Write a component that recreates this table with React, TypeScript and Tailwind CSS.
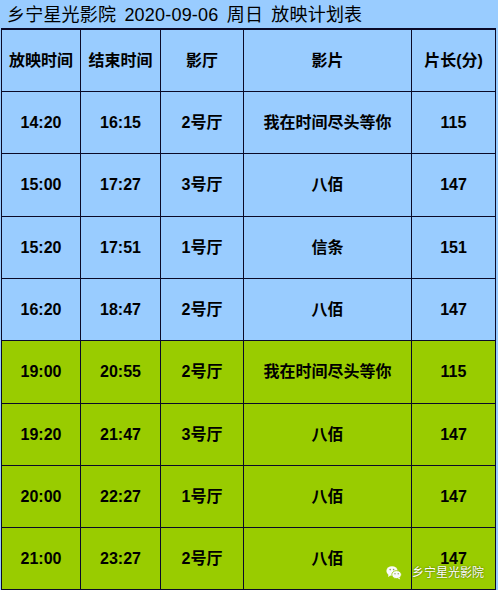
import React from "react";

const rows = [
  { s: "14:20", e: "16:15", h: "2号厅", m: "我在时间尽头等你", d: "115", g: false, cls: "h-[62px]" },
  { s: "15:00", e: "17:27", h: "3号厅", m: "八佰", d: "147", g: false, cls: "h-[63px]" },
  { s: "15:20", e: "17:51", h: "1号厅", m: "信条", d: "151", g: false, cls: "h-[62px]" },
  { s: "16:20", e: "18:47", h: "2号厅", m: "八佰", d: "147", g: false, cls: "h-[62px]" },
  { s: "19:00", e: "20:55", h: "2号厅", m: "我在时间尽头等你", d: "115", g: true, cls: "h-[63px]" },
  { s: "19:20", e: "21:47", h: "3号厅", m: "八佰", d: "147", g: true, cls: "h-[62px]" },
  { s: "20:00", e: "22:27", h: "1号厅", m: "八佰", d: "147", g: true, cls: "h-[62px]" },
  { s: "21:00", e: "23:27", h: "2号厅", m: "八佰", d: "147", g: true, cls: "h-[62px]" },
];

const widths = ["w-[79px]", "w-[80px]", "w-[83px]", "w-[168px]", "w-[84px]"];

function Cell({ w, children }: { w: string; children: React.ReactNode }) {
  return (
    <div className={`${w} shrink-0 flex items-center justify-center border-r border-b border-[#0a0a28] text-[16px] font-bold text-black`}>
      {children}
    </div>
  );
}

function WeChat() {
  return (
    <svg width="16" height="15" viewBox="0 0 16 15">
      <ellipse cx="6" cy="6" rx="5.6" ry="4.8" fill="#fafafa" />
      <path d="M2.5 9.5 L2 12 L4.5 10.5 Z" fill="#fafafa" />
      <circle cx="4.2" cy="4.6" r="0.8" fill="#8aa060" />
      <circle cx="7.6" cy="4.6" r="0.8" fill="#8aa060" />
      <ellipse cx="10.6" cy="9.6" rx="4.8" ry="4" fill="#fafafa" stroke="#99cc00" strokeWidth="0.8" />
      <path d="M13.5 12.6 L14.2 14.6 L11.8 13.2 Z" fill="#fafafa" />
      <circle cx="9" cy="8.8" r="0.7" fill="#8aa060" />
      <circle cx="12.2" cy="8.8" r="0.7" fill="#8aa060" />
    </svg>
  );
}

export default function App() {
  return (
    <div
      className="w-[498px] h-[594px] bg-white relative overflow-hidden"
      style={{ fontFamily: '"Liberation Sans", "Noto Sans CJK SC", sans-serif' }}
    >
      <div className="bg-[#99ccff] w-[498px]">
        <div className="h-[28px] flex items-center pl-[7px] pt-[1px] text-[18px] text-black leading-none whitespace-pre [word-spacing:3px] tracking-[0.2px]">
          {"乡宁星光影院 2020-09-06 周日 放映计划表"}
        </div>
        <div className="ml-[1px] w-[495px] border-t-2 border-l border-[#0a0a28]">
          <div className="flex h-[62px] bg-[#99ccff]">
            <Cell w={widths[0]}>放映时间</Cell>
            <Cell w={widths[1]}>结束时间</Cell>
            <Cell w={widths[2]}>影厅</Cell>
            <Cell w={widths[3]}>影片</Cell>
            <Cell w={widths[4]}>片长(分)</Cell>
          </div>
          {rows.map((r, i) => (
            <div key={i} className={`flex ${r.cls} ${r.g ? "bg-[#99cc00]" : "bg-[#99ccff]"}`}>
              <Cell w={widths[0]}>{r.s}</Cell>
              <Cell w={widths[1]}>{r.e}</Cell>
              <Cell w={widths[2]}>{r.h}</Cell>
              <Cell w={widths[3]}>{r.m}</Cell>
              <Cell w={widths[4]}>{r.d}</Cell>
            </div>
          ))}
        </div>
      </div>
      <div className="absolute left-[386px] top-[565px] flex items-center gap-[10px]">
        <WeChat />
        <span
          className="text-[12px] text-white leading-none"
          style={{ textShadow: "0 0 2px rgba(0,0,0,0.6)" }}
        >
          乡宁星光影院
        </span>
      </div>
    </div>
  );
}
